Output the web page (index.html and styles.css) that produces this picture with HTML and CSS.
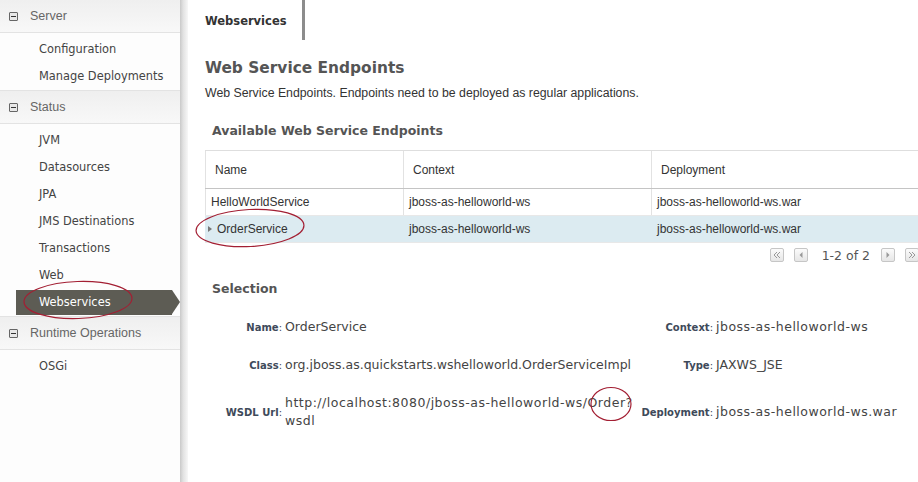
FILE: index.html
```html
<!DOCTYPE html>
<html>
<head>
<link rel="stylesheet" href="styles.css">
</head>
<body>

<div class="page">
  <nav class="sidebar">
    <div class="group-head"><span class="toggle"></span>Server</div>
    <ul class="group">
      <li>Configuration</li>
      <li>Manage Deployments</li>
    </ul>
    <div class="group-head"><span class="toggle"></span>Status</div>
    <ul class="group">
      <li>JVM</li>
      <li>Datasources</li>
      <li>JPA</li>
      <li>JMS Destinations</li>
      <li>Transactions</li>
      <li>Web</li>
      <li class="active">Webservices</li>
    </ul>
    <div class="group-head"><span class="toggle"></span>Runtime Operations</div>
    <ul class="group last">
      <li>OSGi</li>
    </ul>
  </nav>
  <div class="gutter"></div>

  <main class="content">
    <div class="tabbar"><div class="tab">Webservices</div></div>

    <h1>Web Service Endpoints</h1>
    <p class="desc">Web Service Endpoints. Endpoints need to be deployed as regular applications.</p>

    <h2>Available Web Service Endpoints</h2>
    <div class="endpoints">
      <table>
        <colgroup><col class="c-name"><col class="c-ctx"><col></colgroup>
        <tr><th>Name</th><th>Context</th><th>Deployment</th></tr>
        <tr><td>HelloWorldService</td><td>jboss-as-helloworld-ws</td><td>jboss-as-helloworld-ws.war</td></tr>
        <tr class="selected"><td><span class="marker"></span>OrderService</td><td>jboss-as-helloworld-ws</td><td>jboss-as-helloworld-ws.war</td></tr>
      </table>
      <div class="pager">
        <span class="pbtn"><svg width="8" height="8" viewBox="0 0 8 8"><path d="M4 1L1 4l3 3M7 1L4 4l3 3" fill="none" stroke="#999" stroke-width="1"/></svg></span>
        <span class="pbtn"><svg width="8" height="8" viewBox="0 0 8 8"><path d="M5.5 1L2.5 4l3 3z" fill="#999"/></svg></span>
        <span class="pcount">1-2 of 2</span>
        <span class="pbtn"><svg width="8" height="8" viewBox="0 0 8 8"><path d="M2.5 1l3 3-3 3z" fill="#999"/></svg></span>
        <span class="pbtn"><svg width="8" height="8" viewBox="0 0 8 8"><path d="M1 1l3 3-3 3M4 1l3 3-3 3" fill="none" stroke="#999" stroke-width="1"/></svg></span>
      </div>
    </div>

    <h2 class="sel-title">Selection</h2>
    <div class="selection">
      <div class="lbl">Name<span>:</span></div>
      <div class="val">OrderService</div>
      <div class="lbl">Context<span>:</span></div>
      <div class="val wide">jboss-as-helloworld-ws</div>

      <div class="lbl">Class<span>:</span></div>
      <div class="val">org.jboss.as.quickstarts.wshelloworld.OrderServiceImpl</div>
      <div class="lbl">Type<span>:</span></div>
      <div class="val">JAXWS_JSE</div>

      <div class="lbl">WSDL Url<span>:</span></div>
      <div class="val wide url">http://localhost:8080/jboss-as-helloworld-ws/Order?<wbr>wsdl</div>
      <div class="lbl">Deployment<span>:</span></div>
      <div class="val wide">jboss-as-helloworld-ws.war</div>
    </div>
  </main>
</div>

<svg class="marks" width="918" height="482" viewBox="0 0 918 482">
  <ellipse cx="78" cy="300" rx="54" ry="18.5" transform="rotate(-2 78 300)"/>
  <ellipse cx="250" cy="228" rx="54" ry="18.5" transform="rotate(-3 250 228)"/>
  <ellipse cx="611" cy="404" rx="20" ry="16.5"/>
</svg>

</body>
</html>
```

FILE: styles.css
```css
body {
  margin: 0;
  height: 482px;
  overflow: hidden;
  background-color: #fff;
  font-family: "Liberation Sans", Arial, sans-serif;
}

.page {
  display: flex;
  height: 100%;
}

/* left navigation */

.sidebar {
  width: 180px;
  flex: none;
  background-color: #fdfdfd;
}

.gutter {
  width: 8px;
  flex: none;
  background-image: linear-gradient(to right, #c9c9c9, #e2e2e2 40%, #f7f7f7);
}

.group-head {
  height: 32px;
  display: flex;
  align-items: center;
  gap: 12px;
  padding-left: 9px;
  border-bottom: 1px solid #e3e3e3;
  background-image: linear-gradient(to bottom, #efefef, #f8f8f8);
  font-size: 12.5px;
  color: #666;
}

.toggle {
  width: 7px;
  height: 7px;
  border: 1px solid #666;
  border-radius: 1px;
  background-color: #e8e8e8;
  position: relative;
}

.toggle::after {
  content: "";
  position: absolute;
  left: 1px;
  right: 1px;
  top: 3px;
  height: 1px;
  background-color: #333;
}

.group {
  list-style: none;
  margin: 0;
  padding: 3px 0 0;
  border-bottom: 1px solid #e3e3e3;
}

.group.last {
  border-bottom: none;
}

.group li {
  height: 25px;
  line-height: 25px;
  border-top: 1px solid transparent;
  border-bottom: 1px solid transparent;
  background-clip: padding-box;
  padding-left: 39px;
  font-family: "DejaVu Sans", Verdana, sans-serif;
  font-size: 11.4px;
  color: #444;
}

.group li.active {
  position: relative;
  width: 133px;
  margin-left: 16px;
  padding-left: 23px;
  background-color: #5d5c54;
  color: #fff;
}

.group li.active::after {
  content: "";
  position: absolute;
  left: 100%;
  top: 0;
  border-left: 8px solid #5d5c54;
  border-top: 12.5px solid transparent;
  border-bottom: 12.5px solid transparent;
}

/* main panel */

.content {
  flex: 1;
  min-width: 0;
  overflow: hidden;
  padding-left: 17px;
}

.tabbar {
  height: 40px;
  display: flex;
}

.tab {
  padding-right: 15px;
  border-right: 3px solid #8c8c8c;
  line-height: 42px;
  font-family: "DejaVu Sans", Verdana, sans-serif;
  font-weight: bold;
  font-size: 11.5px;
  color: #333;
}

h1 {
  margin: 18px 0 0;
  font-family: "DejaVu Sans", Verdana, sans-serif;
  font-size: 15.4px;
  line-height: 20px;
  color: #555;
}

.desc {
  margin: 7px 0 0;
  font-size: 12.3px;
  line-height: 16px;
  color: #333;
}

h2 {
  margin: 21px 0 0;
  padding-left: 7px;
  font-family: "DejaVu Sans", Verdana, sans-serif;
  font-size: 12.5px;
  line-height: 18px;
  color: #555;
}

.endpoints {
  width: 717px;
  margin-top: 10px;
}

table {
  width: 100%;
  border-collapse: collapse;
  table-layout: fixed;
  font-size: 12px;
  color: #333;
}

.c-name {
  width: 198px;
}

.c-ctx {
  width: 248px;
}

th {
  height: 36px;
  padding: 1px 0 0 9px;
  text-align: left;
  font-weight: normal;
  border-top: 1px solid #dedede;
  border-left: 1px solid #e2e2e2;
  border-bottom: 1px solid #c4c4c4;
}

td {
  height: 26px;
  padding: 0 0 0 5px;
  border-left: 1px solid #e2e2e2;
  border-bottom: 1px solid #e8e8e8;
}

tr.selected td {
  background-color: #dcebf1;
  border-left-color: #dcebf1;
}

.marker {
  display: inline-block;
  margin: 0 5px 0 -3px;
  border-left: 4px solid #777;
  border-top: 3px solid transparent;
  border-bottom: 3px solid transparent;
  vertical-align: 1px;
}

.pager {
  display: flex;
  justify-content: flex-end;
  align-items: center;
  height: 16px;
  margin-top: 4px;
  padding-right: 3px;
}

.pbtn {
  width: 12px;
  height: 12px;
  margin-left: 10px;
  display: flex;
  align-items: center;
  justify-content: center;
  border: 1px solid #c6c6c6;
  border-radius: 2px;
  background-image: linear-gradient(to bottom, #fbfbfb, #e6e6e6);
}

.pcount {
  margin: 0 1px 0 14px;
  font-family: "DejaVu Sans", Verdana, sans-serif;
  font-size: 12.5px;
  color: #555;
}

.sel-title {
  margin-top: 17px;
}

.selection {
  display: grid;
  grid-template-columns: 80px 355px 76px auto;
  row-gap: 20px;
  align-items: center;
  margin-top: 20px;
}

.lbl {
  padding-right: 3px;
  text-align: right;
  font-family: "DejaVu Sans", Verdana, sans-serif;
  font-weight: bold;
  font-size: 10px;
  color: #3e4a5a;
}

.lbl span {
  font-weight: normal;
}

.val {
  font-family: "DejaVu Sans", Verdana, sans-serif;
  font-size: 12.5px;
  line-height: 18px;
  color: #444;
  white-space: nowrap;
}

.val.wide {
  letter-spacing: 0.5px;
}

.val.url {
  white-space: normal;
}

/* hand-drawn annotation rings */

.marks {
  position: absolute;
  left: 0;
  top: 0;
  pointer-events: none;
}

.marks ellipse {
  fill: none;
  stroke: #a31f33;
  stroke-width: 1.2;
}
```
